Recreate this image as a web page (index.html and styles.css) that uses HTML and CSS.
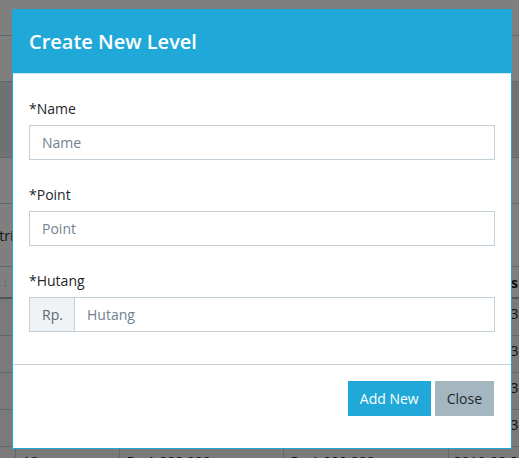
FILE: index.html
```html
<!DOCTYPE html>
<html lang="id">
<head>
<meta charset="utf-8">
<title>Create New Level</title>
<link rel="stylesheet" href="styles.css">
</head>
<body>
<div class="page">
  <div class="topbar"></div>
  <div class="crumb"></div>
  <div class="card-head"></div>
  <div class="toolbar"></div>
  <div class="filter"><span class="filter-label">Distributor</span></div>
  <table class="grid">
    <thead>
      <tr><th class="c0"><span class="sort">↑↓</span></th><th class="c1">Level</th><th class="c2">Point</th><th class="c3">Hutang</th><th class="c4">Tgl Diskon</th></tr>
    </thead>
    <tbody>
      <tr><td class="c0"></td><td>1</td><td>Rp 1.000.000</td><td>Rp 1.000.000</td><td>2019-09-30</td></tr>
      <tr><td class="c0"></td><td>2</td><td>Rp 1.000.000</td><td>Rp 1.000.000</td><td>2019-09-30</td></tr>
      <tr><td class="c0"></td><td>3</td><td>Rp 1.000.000</td><td>Rp 1.000.000</td><td>2019-09-30</td></tr>
      <tr><td class="c0"></td><td>4</td><td>Rp 1.000.000</td><td>Rp 1.000.000</td><td>2019-09-30</td></tr>
      <tr><td class="c0"></td><td>10</td><td>Rp 1.000.000</td><td>Rp 1.000.000</td><td>2019-09-30</td></tr>
    </tbody>
  </table>
</div>
<div class="backdrop"></div>
<div class="modal">
  <div class="modal-header"><h4 class="modal-title">Create New Level</h4></div>
  <div class="modal-body">
    <div class="form-group">
      <label class="label">*Name</label>
      <input class="input" type="text" placeholder="Name">
    </div>
    <div class="form-group">
      <label class="label">*Point</label>
      <input class="input" type="text" placeholder="Point">
    </div>
    <div class="form-group">
      <label class="label">*Hutang</label>
      <div class="input-group">
        <span class="prepend">Rp.</span>
        <input class="input grow" type="text" placeholder="Hutang">
      </div>
    </div>
  </div>
  <div class="modal-footer">
    <button class="btn btn-primary">Add New</button>
    <button class="btn btn-secondary">Close</button>
  </div>
</div>
</body>
</html>
```
FILE: styles.css
```css
* { box-sizing: border-box; }
html, body { margin: 0; padding: 0; }
body {
  width: 519px;
  height: 458px;
  overflow: hidden;
  position: relative;
  font-family: "Open Sans", "Noto Sans", sans-serif;
  font-size: 14px;
  line-height: 21px;
  color: #23282c;
  background: #ffffff;
}
.page { width: 519px; }
.topbar { height: 36px; border-bottom: 1px solid #c8ced3; background: #fff; }
.crumb { height: 46px; border-bottom: 1px solid #c8ced3; background: #fff; }
.card-head { height: 76px; border-bottom: 1px solid #c8ced3; background: #e0e2e4; }
.toolbar { height: 46px; border-bottom: 1px solid #c8ced3; background: #fff; }
.filter { height: 62px; display: flex; align-items: center; background: #fff; }
.filter-label { margin-left: -21px; }
.grid { border-collapse: collapse; width: 600px; background: #f4f5f6; table-layout: fixed; }
.grid th, .grid td {
  padding: 4px 6px 11px 7px;
  border-top: 1px solid #c8ced3;
  border-left: 1px solid #c8ced3;
  text-align: left;
  vertical-align: top;
  white-space: nowrap;
  overflow: hidden;
  height: 37px;
}
.grid th {
  height: 31px;
  padding-top: 5px;
  padding-bottom: 4px;
  border-bottom: 2px solid #a4aab0;
  background: #fff;
}
.grid .c0 { width: 15px; padding: 0; border-left: 0; }
.grid .c1 { width: 104px; }
.grid .c2 { width: 164px; }
.grid .c3 { width: 165px; }
.grid .c4 { width: 152px; padding-left: 24px; }
.grid td:nth-child(5) { padding-left: 5px; }
.sort { display: block; color: #c0c4c8; font-size: 12px; margin: 5px 0 0 -4px; }

.backdrop {
  position: absolute;
  inset: 0;
  background: rgba(0, 0, 0, 0.5);
}

.modal {
  position: absolute;
  left: 12px;
  top: 9px;
  width: 500px;
  height: 440px;
  background: #fff;
  border: 1px solid #20a8d8;
  display: flex;
  flex-direction: column;
}
.modal-header {
  height: 64px;
  background: #20a8d8;
  border-bottom: 1px solid #cfe7f0;
  display: flex;
  align-items: center;
  padding: 0 16px;
}
.modal-title {
  margin: 0;
  color: #fff;
  font-size: 20px;
  font-weight: 600;
  line-height: 24px;
}
.modal-body { padding: 22px 16px 10px; }
.form-group { margin-bottom: 22px; }
.label { display: block; padding-top: 2px; margin-bottom: 6px; color: #23282c; }
.input {
  display: block;
  width: 100%;
  height: 35px;
  padding: 6px 12px;
  border: 1px solid #c2cfd6;
  border-radius: 0;
  font-family: inherit;
  font-size: 14px;
  line-height: 21px;
  color: #5c6873;
  background: #fff;
  outline: none;
}
.input::placeholder { color: #73818f; opacity: 1; }
.input-group { display: flex; }
.prepend {
  width: 45px;
  height: 35px;
  padding: 6px 12px;
  background: #f0f3f5;
  border: 1px solid #c2cfd6;
  border-right: 0;
  color: #5c6873;
}
.grow { flex: 1; width: auto; }
.modal-footer {
  border-top: 1px solid #c2cfd6;
  padding: 16px 17px 0 16px;
  display: flex;
  justify-content: flex-end;
  gap: 4px;
}
.btn {
  height: 35px;
  padding: 6px 11px;
  border: 1px solid transparent;
  border-radius: 0;
  font-family: inherit;
  font-size: 14px;
  line-height: 21px;
}
.btn-primary { background: #20a8d8; border-color: #20a8d8; color: #fff; }
.btn-secondary { background: #a4b7c1; border-color: #a4b7c1; color: #23282c; }
```
